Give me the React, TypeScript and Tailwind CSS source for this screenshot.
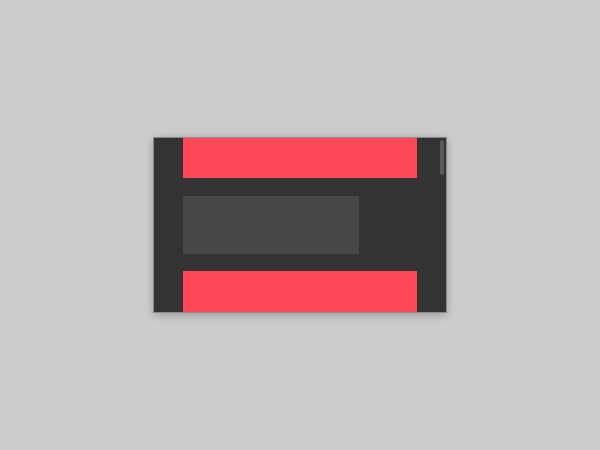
import React from 'react';

export default function App() {
  return (
    <div className="w-[600px] h-[450px] bg-[#cccccc] pl-[153px] pt-[137px]">
      <div className="relative w-[294px] h-[176px] bg-[#333333] overflow-hidden border border-[#8a8a8a] shadow-[0_2px_8px_rgba(0,0,0,0.25)]">
        <div className="flex flex-col gap-[18px] pl-[29px] -mt-px">
          <div className="w-[234px] h-[41px] shrink-0 bg-[#ff4757]" />
          <div className="w-[176px] h-[58px] shrink-0 bg-[#484848]" />
          <div className="w-[234px] h-[60px] shrink-0 bg-[#ff4757] -mt-px" />
        </div>
        <div className="absolute right-[2px] top-[2px] w-[4px] h-[35px] rounded-full bg-[#5a5a5a]" />
      </div>
    </div>
  );
}
